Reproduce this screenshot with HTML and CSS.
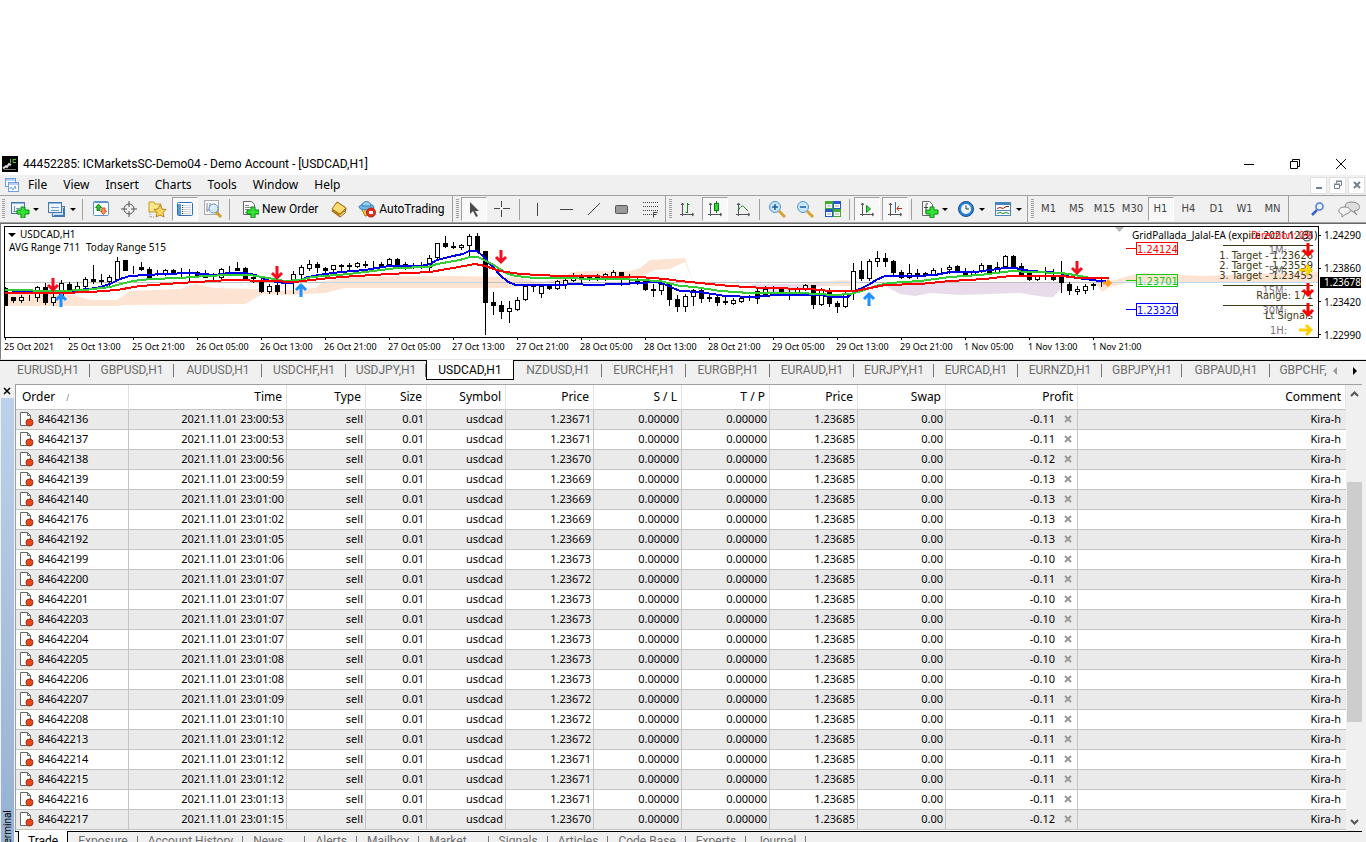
FILE: index.html
```html
<!DOCTYPE html>
<html lang="en">
<head>
    <meta charset="utf-8">
    <title>44452285: ICMarketsSC-Demo04 - Demo Account - [USDCAD,H1]</title>
    <link rel="stylesheet" href="styles.css">
</head>
<body>
    <header class="titlebar">
        <svg class="app-icon" width="16" height="16" viewBox="0 0 16 16">
            <rect width="16" height="16" fill="#000"/>
            <path d="M1 12.500 L4 10 L5 11 L7 8 L9 9" stroke="#d8d8d8" stroke-width="2" fill="none"/>
            <path d="M8.500 3v4 M14 3.500h-3v3h3" stroke="#58c322" fill="none"/>
            <path d="M2 13.500 H14" stroke="#777"/>
        </svg>
        <h1>44452285: ICMarketsSC-Demo04 - Demo Account - [USDCAD,H1]</h1>
        <div class="window-buttons">
            <button aria-label="Minimize"><svg width="12" height="12"><path d="M1 6.500H11" stroke="#000"/></svg></button>
            <button aria-label="Restore"><svg width="12" height="12" fill="none" stroke="#000"><path d="M1.500 3.500h7v7h-7z M3.500 3.500v-2h7v7h-2"/></svg></button>
            <button aria-label="Close"><svg width="12" height="12"><path d="M1 1L11 11M11 1L1 11" stroke="#000"/></svg></button>
        </div>
    </header>

    <nav class="menubar">
        <svg class="doc-icon" width="16" height="16" fill="none" stroke="#6d9fe0">
            <rect x="1.500" y="1.500" width="10" height="8" fill="#fff"/><path d="M1 3H12"/>
            <rect x="4.500" y="5.500" width="10" height="9" fill="#fff"/><path d="M4 7H15"/>
            <path d="M6 12l1-2 2 3 2-4 1 3"/>
        </svg>
        <button>File</button>
        <button>View</button>
        <button>Insert</button>
        <button>Charts</button>
        <button>Tools</button>
        <button>Window</button>
        <button>Help</button>
        <div class="mdi-buttons">
            <button aria-label="Minimize chart"><svg width="10" height="10"><path d="M2 8H8" stroke="#71808f" stroke-width="2"/></svg></button>
            <button aria-label="Restore chart"><svg width="10" height="10" fill="none" stroke="#71808f"><path d="M1.500 4.500h5v4h-5z M1 4h6 M3.500 3.500v-2h5v4h-2 M3 1h6"/></svg></button>
            <button aria-label="Close chart"><svg width="10" height="10"><path d="M2 2L8 8M8 2L2 8" stroke="#71808f" stroke-width="2"/></svg></button>
        </div>
    </nav>

    <div class="toolbars">
        <div class="toolbar">
            <span class="grip"></span>
            <button class="tool split" aria-label="New chart">
                <svg width="20" height="18"><rect x="1.500" y="2.500" width="13" height="11" fill="#eef5fc" stroke="#3f78b5"/><path d="M1 3H15" stroke="#3f78b5"/><path d="M4.500 6v6M6 8.500h4M3 11.500h6" stroke="#7a92ab"/><path d="M11 7h4v3h4v4h-4v4h-4v-4H7v-4h4z" fill="#2fe52f" stroke="#11831b"/></svg>
                <i class="caret"></i>
            </button>
            <button class="tool split" aria-label="Profiles">
                <svg width="20" height="18"><rect x="5.500" y="6.500" width="12" height="10" fill="#c9def2" stroke="#3f78b5"/><path d="M7 15.500H17M16.500 8v8" stroke="#3f78b5"/><rect x="1.500" y="2.500" width="13" height="10" fill="#eef5fc" stroke="#3f78b5"/><path d="M1 3H15" stroke="#3f78b5"/><path d="M4 7.500h8M4 10.500h8" stroke="#6b9acb"/></svg>
                <i class="caret"></i>
            </button>
            <span class="sep"></span>
            <button class="tool" aria-label="Market Watch">
                <svg width="18" height="18"><rect x="1.500" y="1.500" width="15" height="14" rx="1" fill="#fff" stroke="#5b93cf"/><path d="M2 2.500H16" stroke="#5b93cf"/><path d="M6.500 4l3 3.500H8v3H5v-3H3.500z" fill="#35c035" stroke="#16851c"/><path d="M11.500 14.500l-3-3.500H10V8h3v3h1.500z" fill="#ffa06c" stroke="#d2460c"/></svg>
            </button>
            <button class="tool" aria-label="Data Window">
                <svg width="18" height="18" fill="none" stroke="#555"><circle cx="9" cy="9" r="5"/><path d="M9 1v6M9 11v6M1 9h6M11 9h6"/></svg>
            </button>
            <button class="tool" aria-label="Navigator">
                <svg width="20" height="20"><path d="M2 3h5l1 2h6v8H2z" fill="#fbe58d" stroke="#c79a2a"/><path d="M3 13v5h5" stroke="#888" stroke-dasharray="1 1" fill="none"/><path d="M13 6l2 4 4 .5-3 3 1 4.500-4-2-4 2 1-4.500-3-3 4-.5z" fill="#ffd75e" stroke="#b9801a"/></svg>
            </button>
            <button class="tool pressed" aria-label="Terminal">
                <svg width="18" height="16"><rect x="1.500" y="1.500" width="15" height="13" rx="1" fill="#f8fbff" stroke="#2f6fb7"/><path d="M2 3h3v11H2z" fill="#5d97d6"/><path d="M7 4.500h8M7 6.500h8M7 8.500h8M7 10.500h8M7 12.500h8" stroke="#d2d6dc"/><path d="M6 4.500h1M6 6.500h1M6 8.500h1M6 10.500h1M6 12.500h1" stroke="#444"/></svg>
            </button>
            <button class="tool" aria-label="Strategy Tester">
                <svg width="20" height="20"><rect x="1.500" y="1.500" width="14" height="14" fill="#f8f8f8" stroke="#aaa"/><path d="M4 4v9M4 11h9M7 4v4" stroke="#888"/><path d="M13 13l5 5" stroke="#d49d2d" stroke-width="3"/><circle cx="10.500" cy="9.500" r="4.500" fill="#d6eafa" fill-opacity=".8" stroke="#5a8fc4"/></svg>
            </button>
            <span class="sep"></span>
            <button class="tool wide">
                <svg width="18" height="18"><path d="M2.500 1.500h8l3 3v10h-11z" fill="#fff" stroke="#666"/><path d="M4 5.500h4M4 7.500h6M4 9.500h4M4 12.500h4" stroke="#888"/><path d="M10 7h4v3h4v4h-4v4h-4v-4H6v-4h4z" fill="#2fe52f" stroke="#11831b"/></svg>
                New Order
            </button>
            <button class="tool" aria-label="MetaEditor">
                <svg width="18" height="18"><path d="M7 2l9 6-1 5-5 4-8-6z" fill="#c58a1c" stroke="#8e5d0e"/><path d="M7 2l9 6-6 6-8-5z" fill="#ffdc73" stroke="#a87516"/><path d="M10 16l5-4" stroke="#fff3c8"/></svg>
            </button>
            <button class="tool wide auto">
                <svg width="18" height="18"><path d="M3 8l4 8 6-1 3-7z" fill="#f2c04b" stroke="#b57f17"/><ellipse cx="8.500" cy="7" rx="7.500" ry="3" fill="#6fb4e0" stroke="#3c85b6"/><path d="M4 6c0-6 9-6 9 0z" fill="#93d0f0" stroke="#3c85b6"/><circle cx="13" cy="12.500" r="4.500" fill="#e33119" stroke="#ac1b0a"/><rect x="11" y="11" width="4" height="3" fill="#fff"/></svg>
                AutoTrading
            </button>
        </div>

        <div class="toolbar lines">
            <span class="grip"></span>
            <button class="tool pressed" aria-label="Cursor">
                <svg width="16" height="18"><path d="M4 2v12l3-3 3 6 2-1-3-5h4z" fill="#4a4a4a"/></svg>
            </button>
            <button class="tool" aria-label="Crosshair">
                <svg width="18" height="18" stroke="#444"><path d="M8.500 1v6M8.500 10v7M1 8.500h6M10 8.500h7"/></svg>
            </button>
            <span class="sep"></span>
            <button class="tool" aria-label="Vertical line"><svg width="16" height="16"><path d="M7.500 2v13" stroke="#444"/></svg></button>
            <button class="tool" aria-label="Horizontal line"><svg width="16" height="16"><path d="M2 8.500h13" stroke="#444"/></svg></button>
            <button class="tool" aria-label="Trendline"><svg width="16" height="16"><path d="M2 14L14 2" stroke="#444"/></svg></button>
            <button class="tool" aria-label="Rectangle"><svg width="16" height="16"><rect x="1.500" y="4.500" width="12" height="8" rx="1" fill="#999" stroke="#555"/></svg></button>
            <button class="tool" aria-label="Fibonacci retracement"><svg width="18" height="20"><path d="M2 3.500h15M2 7.500h15M2 11.500h15M2 15.500h9" stroke="#444" stroke-dasharray="1 1"/><path d="M12.500 18.500v-5h4M12.500 15.500h3" stroke="#444" fill="none"/></svg></button>
        </div>

        <div class="toolbar charts">
            <span class="grip"></span>
            <button class="tool" aria-label="Bar chart"><svg width="18" height="18"><path d="M4.500 3v13M2 14.500h13M3 5l1.500-2 1.500 2M14 13l2 1.500-2 1.500" stroke="#555" fill="none"/><path d="M9.500 12.500h-2M9.500 3v10M9.500 4.500h2" stroke="#10891a"/></svg></button>
            <button class="tool pressed" aria-label="Candlesticks"><svg width="18" height="18"><path d="M4.500 3v13M2 14.500h13M3 5l1.500-2 1.500 2M14 13l2 1.500-2 1.500" stroke="#555" fill="none"/><path d="M10.500 1v12" stroke="#0a7a14"/><rect x="8.500" y="3.500" width="4" height="7" fill="#33d540" stroke="#0a7a14"/></svg></button>
            <button class="tool" aria-label="Line chart"><svg width="18" height="18"><path d="M4.500 3v13M2 14.500h13M3 5l1.500-2 1.500 2M14 13l2 1.500-2 1.500" stroke="#555" fill="none"/><path d="M4 11c3-6 5-6 7-3l3 3" stroke="#10891a" fill="none"/></svg></button>
            <span class="sep"></span>
            <button class="tool" aria-label="Zoom in"><svg width="18" height="18"><path d="M11 11l6 6" stroke="#d8a22c" stroke-width="3"/><circle cx="7" cy="7" r="5.500" fill="#c9e6fa" stroke="#4f93cc"/><path d="M4 7h6M7 4v6" stroke="#1c5d9c" stroke-width="1.500"/></svg></button>
            <button class="tool" aria-label="Zoom out"><svg width="18" height="18"><path d="M11 11l6 6" stroke="#d8a22c" stroke-width="3"/><circle cx="7" cy="7" r="5.500" fill="#c9e6fa" stroke="#4f93cc"/><path d="M4 7h6" stroke="#1c5d9c" stroke-width="1.500"/></svg></button>
            <button class="tool" aria-label="Tile windows"><svg width="18" height="18"><path d="M1 1h8v8H1z" fill="#3fae2e"/><path d="M9 9h8v8H9z" fill="#3fae2e"/><path d="M9 1h8v8H9z M1 9h8v8H1z" fill="#2554d0"/><path d="M2 4h6v4H2z M10 4h6v4h-6z M2 12h6v4H2z M10 12h6v4h-6z" fill="#fff"/><path d="M3 6h4M11 6h4M3 14h4M11 14h4" stroke="#9ab"/></svg></button>
            <span class="sep"></span>
            <button class="tool pressed" aria-label="Auto scroll"><svg width="18" height="18"><path d="M4.500 3v13M2 14.500h13M3 5l1.500-2 1.500 2M14 13l2 1.500-2 1.500" stroke="#555" fill="none"/><path d="M8.500 5.500v7l4-3.500z" fill="#4ad64a" stroke="#10891a"/></svg></button>
            <button class="tool pressed" aria-label="Chart shift"><svg width="18" height="18"><path d="M4.500 3v13M2 14.500h13M3 5l1.500-2 1.500 2M14 13l2 1.500-2 1.500" stroke="#555" fill="none"/><path d="M9.500 2v11" stroke="#2a72b5"/><path d="M11 8.500h5M13 6l-2 2.500 2 2.500" stroke="#c03010" fill="none"/></svg></button>
            <span class="sep"></span>
            <button class="tool split" aria-label="Indicators">
                <svg width="20" height="18"><path d="M3.500 1.500h7l3 3v11h-10z" fill="#fff" stroke="#666"/><path d="M9 4c-2-1-2 0-2 2v7M5 7.500h4" stroke="#444" fill="none"/><path d="M11 7h4v3h4v4h-4v4h-4v-4H7v-4h4z" fill="#2fe52f" stroke="#11831b"/></svg>
                <i class="caret"></i>
            </button>
            <button class="tool split" aria-label="Periods">
                <svg width="20" height="18"><circle cx="10" cy="9" r="7.500" fill="#2c7fd0" stroke="#164f93"/><circle cx="10" cy="9" r="5" fill="#eef6fd"/><path d="M10 5.500V9h3" stroke="#333" fill="none"/></svg>
                <i class="caret"></i>
            </button>
            <button class="tool split" aria-label="Templates">
                <svg width="20" height="18"><rect x="2.500" y="2.500" width="15" height="13" fill="#fff" stroke="#4a84bf"/><path d="M2 3.500h16" stroke="#4a84bf" stroke-width="3"/><path d="M2 10.500h16" stroke="#4a84bf"/><path d="M4 8.500l3-1 3 1 3-2 3 0" stroke="#a02010" fill="none"/><path d="M4 13.500l3-1 3 1 3-1 3 1" stroke="#20802a" fill="none"/></svg>
                <i class="caret"></i>
            </button>
        </div>

        <div class="toolbar periods">
            <span class="grip"></span>
            <button class="tool">M1</button>
            <button class="tool">M5</button>
            <button class="tool">M15</button>
            <button class="tool">M30</button>
            <button class="tool pressed">H1</button>
            <button class="tool">H4</button>
            <button class="tool">D1</button>
            <button class="tool">W1</button>
            <button class="tool">MN</button>
        </div>

        <div class="toolbar-right">
            <button class="tool" aria-label="Search"><svg width="16" height="16"><path d="M7 9l-5 5" stroke="#3a62c8" stroke-width="2.500"/><circle cx="9.500" cy="5.500" r="3.500" fill="#eef4ff" stroke="#4a78e0" stroke-width="1.500"/></svg></button>
            <button class="tool" aria-label="Chat"><svg width="22" height="18"><path d="M13 2c11 0 11 9 3 9l3 4-5-4c-9 0-9-9-1-9z" fill="#ddd" stroke="#888"/><path d="M6 7c8 0 8 6 2 7l-4 3 0-3c-5-1-4-7 2-7z" fill="#f4f4f4" stroke="#888"/></svg></button>
        </div>
    </div>

    <main class="chart">
        <div class="chart-body">
            <svg class="plot" id="plot">
                <!-- everything below is drawn in window coordinates -->
                <g transform="translate(-5,-227)">
                    <g id="clouds"></g>
                    <path d="M5 282.500H1318" stroke="#c0c0c0"/>
                    <path d="M325 282.500H485 M820 282.500H860 M1110 282.500H1318" stroke="#b9dcf4"/>
                    <g id="candles"></g>
                    <g id="averages"></g>
                    <g id="signals"></g>

                    <path d="M8 233h8l-4 4z" fill="#000"/>
                    <text class="label" x="20" y="238">USDCAD,H1</text>
                    <text class="label" x="9" y="251">AVG Range 711</text>
                    <text class="label" x="86" y="251">Today Range 515</text>

                    <path d="M1115 227h9l-4.500 5z" fill="#b8b8b8"/>
                    <text class="label" x="1132" y="239">GridPallada_Jalal-EA (expire 2021.12.31)</text>
                    <text class="label red" x="1251" y="239">Direction: 0%</text>
                    <circle cx="1307" cy="236" r="5" fill="none" stroke="#333"/>
                    <path d="M1304 235h1M1309 235h1M1304 239q3-3 6 0" stroke="#333" fill="none"/>

                    <g class="level red"><path d="M1126 248.500h10"/><rect x="1136.500" y="242.500" width="41" height="12"/><text x="1137" y="253">1.24124</text></g>
                    <g class="level green"><path d="M1126 280.500h10"/><rect x="1136.500" y="274.500" width="41" height="12"/><text x="1137" y="285">1.23701</text></g>
                    <g class="level blue"><path d="M1126 309.500h10"/><rect x="1136.500" y="303.500" width="41" height="12"/><text x="1137" y="314">1.23320</text></g>

                    <path d="M1223 245.500h90M1223 285.500h90M1223 305.500h90" stroke="#3f3a14"/>
                    <g class="frames">
                        <text x="1287" y="254">1M:</text>
                        <text x="1287" y="274">5M:</text>
                        <text x="1287" y="294">15M:</text>
                        <text x="1287" y="314">30M:</text>
                        <text x="1287" y="334">1H:</text>
                    </g>
                    <g class="targets">
                        <text x="1313" y="259">1. Target - 1.23626</text>
                        <text x="1313" y="269">2. Target - 1.23559</text>
                        <text x="1313" y="279">3. Target - 1.23455</text>
                        <text x="1313" y="299">Range: 171</text>
                        <text x="1313" y="319">Lt Signals</text>
                    </g>
                    <g id="panel-arrows"></g>
                </g>
            </svg>
            <div class="price-scale">
                <span>1.24290</span>
                <span>1.23860</span>
                <span>1.23420</span>
                <span>1.22990</span>
                <b>1.23678</b>
            </div>
        </div>
        <div class="time-scale" id="time-scale"></div>
    </main>

    <nav class="chart-tabs">
        <a href="#">EURUSD,H1</a>
        <a href="#">GBPUSD,H1</a>
        <a href="#" class="long">AUDUSD,H1</a>
        <a href="#">USDCHF,H1</a>
        <a href="#" class="short">USDJPY,H1</a>
        <a href="#" class="long active">USDCAD,H1</a>
        <a href="#" class="long">NZDUSD,H1</a>
        <a href="#">EURCHF,H1</a>
        <a href="#">EURGBP,H1</a>
        <a href="#">EURAUD,H1</a>
        <a href="#" class="short">EURJPY,H1</a>
        <a href="#">EURCAD,H1</a>
        <a href="#">EURNZD,H1</a>
        <a href="#" class="short">GBPJPY,H1</a>
        <a href="#" class="long">GBPAUD,H1</a>
        <a href="#" class="last">GBPCHF,</a>
        <div class="tab-scroll">
            <button aria-label="Scroll left"><svg width="6" height="8"><path d="M5 0v8L1 4z" fill="#999"/></svg></button>
            <button aria-label="Scroll right"><svg width="6" height="8"><path d="M1 0v8l4-4z" fill="#000"/></svg></button>
        </div>
    </nav>

    <section class="terminal">
        <aside class="terminal-side">
            <button aria-label="Close terminal"><svg width="8" height="8"><path d="M1 1L7 7M7 1L1 7" stroke="#000" stroke-width="1.500"/></svg></button>
            <div class="terminal-name">Terminal</div>
        </aside>
        <div class="terminal-main">
            <div class="orders">
                <table>
                    <colgroup>
                        <col class="c-order"><col class="c-time"><col class="c-type"><col class="c-size"><col class="c-type">
                        <col class="c-num"><col class="c-num"><col class="c-num"><col class="c-num"><col class="c-num">
                        <col class="c-profit"><col>
                    </colgroup>
                    <thead>
                        <tr>
                            <th>Order <small>/</small></th><th>Time</th><th>Type</th><th>Size</th><th>Symbol</th><th>Price</th>
                            <th>S / L</th><th>T / P</th><th>Price</th><th>Swap</th><th>Profit</th><th>Comment</th>
                        </tr>
                    </thead>
                    <tbody id="orders"></tbody>
                </table>
                <div class="scrollbar">
                    <button aria-label="Scroll up"><svg width="9" height="6"><path d="M1 5l3.500-3.500L8 5" stroke="#555" stroke-width="2" fill="none"/></svg></button>
                    <div class="thumb"></div>
                    <button aria-label="Scroll down"><svg width="9" height="6"><path d="M1 1l3.500 3.500L8 1" stroke="#555" stroke-width="2" fill="none"/></svg></button>
                </div>
            </div>
            <nav class="terminal-tabs">
                <a href="#" class="active">Trade</a>
                <a href="#">Exposure</a>
                <a href="#">Account History</a>
                <a href="#" class="counted">News</a>
                <a href="#">Alerts</a>
                <a href="#">Mailbox</a>
                <a href="#" class="counted">Market</a>
                <a href="#">Signals</a>
                <a href="#">Articles</a>
                <a href="#">Code Base</a>
                <a href="#">Experts</a>
                <a href="#">Journal</a>
            </nav>
        </div>
    </section>

    <script src="script.js"></script>
</body>
</html>
```
FILE: styles.css
```css
* {
    box-sizing: border-box;
}
body {
    margin: 0;
    padding-top: 152px;
    height: 100vh;
    overflow: hidden;
    background: #fff;
    color: #000;
    font: 12px/16px Roboto, "Noto Sans", sans-serif;
}
button {
    padding: 0;
    border: 0;
    background: none;
    color: inherit;
    font: inherit;
}
a {
    color: inherit;
    text-decoration: none;
}
svg {
    display: block;
    flex: none;
}

/* title and menu */
.titlebar {
    display: flex;
    align-items: center;
    height: 23px;
    padding-left: 2px;
}
.titlebar h1 {
    flex: 1;
    margin: 0 0 0 5px;
    font-size: 12px;
    font-weight: normal;
}
.window-buttons {
    display: flex;
    padding-right: 2px;
}
.window-buttons button {
    display: grid;
    place-items: center;
    width: 46px;
    height: 20px;
}
.menubar {
    display: flex;
    align-items: center;
    height: 20px;
    padding-left: 4px;
    background: #f0f0f0;
    font-family: "Noto Sans", "Open Sans", sans-serif;
}
.menubar > button {
    padding: 0 8px;
}
.mdi-buttons {
    display: flex;
    gap: 2px;
    margin-left: auto;
    padding-right: 1px;
}
.mdi-buttons button {
    display: grid;
    place-items: center;
    width: 17px;
    height: 17px;
    background: #fff;
    border: 1px solid #e0e0e0;
}

/* toolbars */
.toolbars {
    display: flex;
    height: 28px;
    border-top: 1px solid #a0a0a0;
    border-bottom: 1px solid #a0a0a0;
    background: #f0f0f0;
}
.toolbar {
    display: flex;
    align-items: center;
    border-right: 1px solid #a0a0a0;
    margin-right: 1px;
    padding-right: 1px;
}
.grip {
    width: 3px;
    height: 20px;
    margin: 0 1px 0 2px;
    background: repeating-linear-gradient(#a0a0a0 0 1px, #f0f0f0 1px 2px);
}
.tool {
    display: flex;
    align-items: center;
    justify-content: center;
    width: 26px;
    height: 24px;
    margin: 0 1px;
    border: 1px solid transparent;
    white-space: nowrap;
}
.tool.pressed {
    border-color: #a0a0a0 #fff #fff #a0a0a0;
    background: #f8f8f8;
}
.tool.split {
    width: 35px;
    gap: 3px;
}
.tool.wide {
    width: auto;
    padding: 0 5px;
    gap: 3px;
}
.tool.auto {
    padding: 0 4px 0 3px;
}
.caret {
    border: 3px solid transparent;
    border-top-color: #000;
    border-bottom: 0;
}
.sep {
    width: 1px;
    height: 21px;
    margin: 0 4px 0 2px;
    background: #a0a0a0;
}
.lines .sep {
    margin: 0 4px 0 3px;
}
.charts .sep {
    margin: 0 3px 0 2px;
}
.periods .tool {
    color: #444;
    font: 10px/14px "DejaVu Sans", sans-serif;
}
.toolbar-right {
    display: flex;
    align-items: center;
    gap: 3px;
    margin-left: auto;
    padding-right: 3px;
}

/* chart window */
.chart {
    height: 137px;
    padding: 2px 0 0 3px;
    border-left: 1px solid #808080;
    border-top: 1px solid #696969;
    border-bottom: 1px solid #e3e3e3;
}
.chart-body {
    display: flex;
    height: 112px;
}
.plot {
    flex: 1;
    min-width: 0;
    height: 112px;
    border: 1px solid #000;
}
.plot text {
    font: 11px "DejaVu Sans Condensed", sans-serif;
}
.plot .label {
    font: 10px "Noto Sans", sans-serif;
}
.plot .red text, .plot .label.red { fill: #f00; }
.plot .green text { fill: #1c1; }
.plot .blue text { fill: #00f; }
.level path, .level rect { fill: none; stroke: #f00; }
.level.green path, .level.green rect { stroke: #1c1; }
.level.blue path, .level.blue rect { stroke: #00f; }
.frames text { fill: #7c7480; text-anchor: end; }
.targets text { fill: #3f3a14; text-anchor: end; }
#averages { shape-rendering: crispEdges; }
.price-scale {
    position: relative;
    display: flex;
    flex-direction: column;
    justify-content: space-between;
    width: 47px;
    height: 116px;
    padding-top: 2px;
    font: 10px/14px "Noto Sans", sans-serif;
}
.price-scale span {
    display: flex;
    align-items: center;
    gap: 3px;
}
.price-scale span::before {
    content: "";
    width: 2px;
    height: 1px;
    background: #000;
}
.price-scale b {
    position: absolute;
    top: 51px;
    left: 1px;
    width: 41px;
    height: 11px;
    padding-left: 4px;
    background: #000;
    color: #fff;
    font-weight: normal;
    line-height: 11px;
}
.time-scale {
    display: flex;
    font: 9px/14px "Noto Sans", sans-serif;
    white-space: nowrap;
}
.time-scale span {
    flex: 0 0 64px;
}
.time-scale span::before {
    content: "";
    display: block;
    width: 1px;
    height: 2px;
    margin-left: 1px;
    background: #000;
}

/* chart tabs */
.chart-tabs {
    display: flex;
    height: 20px;
    padding-left: 6px;
    border-top: 1px solid #000;
    background: #f0f0f0;
    color: #6d6d6d;
}
.chart-tabs a {
    display: flex;
    align-items: center;
    justify-content: center;
    flex: 0 0 84px;
    height: 17px;
    background: linear-gradient(#777, #777) right 3px / 1px 13px no-repeat;
}
.chart-tabs a.long {
    flex-basis: 88px;
}
.chart-tabs a.short {
    flex-basis: 80px;
}
.chart-tabs a.active {
    margin-top: -1px;
    height: 20px;
    border: 1px solid #000;
    border-top: 0;
    background: #fff;
    color: #000;
}
.chart-tabs a.last {
    flex: 0 0 60px;
    padding-left: 6px;
    background: none;
}
.tab-scroll {
    display: flex;
    align-items: center;
    gap: 14px;
    margin-left: auto;
    padding-right: 8px;
}

/* terminal */
.terminal {
    display: flex;
    padding-top: 4px;
    background: #f0f0f0;
}
.terminal-side {
    display: flex;
    flex-direction: column;
    width: 15px;
}
.terminal-side button {
    display: grid;
    place-items: center;
    width: 13px;
    height: 14px;
}
.terminal-name {
    flex: 1;
    width: 13px;
    margin-left: 1px;
    padding-top: 9px;
    background: linear-gradient(#95b0d0, #bcd2ea);
    font-size: 10px;
    line-height: 13px;
    writing-mode: vertical-rl;
    transform: rotate(180deg);
}
.terminal-main {
    flex: 1;
    min-width: 0;
    padding-right: 4px;
}
.orders {
    display: flex;
    height: 447px;
    overflow: hidden;
    border-top: 1px solid #a0a0a0;
    border-left: 1px solid #a0a0a0;
    background: #fff;
}
table {
    flex: 1;
    align-self: flex-start;
    table-layout: fixed;
    width: 0;
    border-collapse: separate;
    border-spacing: 0;
    font: 11px/16px "Noto Sans", "Open Sans", sans-serif;
}
.c-order { width: 113px; }
.c-time { width: 158px; }
.c-type { width: 79px; }
.c-size { width: 61px; }
.c-num { width: 88px; }
.c-profit { width: 132px; }
th, td {
    height: 20px;
    padding: 0 2px 2px 0;
    border-right: 1px solid #c4c4c4;
    border-bottom: 1px solid #c4c4c4;
    text-align: right;
    white-space: nowrap;
}
th {
    height: 25px;
    padding: 0 4px 0 0;
    border-right-color: #e2e2e2;
    font-size: 12px;
    font-weight: normal;
}
th:first-child {
    padding-left: 6px;
    text-align: left;
}
th small {
    margin-left: 8px;
    color: #777;
    font-size: 8px;
}
td:last-child {
    padding-right: 5px;
    border-right: 0;
}
tbody tr:nth-child(odd) {
    background: #eaeaea;
}
.ticket {
    display: flex;
    align-items: center;
    gap: 4px;
    padding-left: 3px;
}
.profit {
    display: flex;
    align-items: center;
    justify-content: flex-end;
    gap: 9px;
    padding-right: 3px;
}
.scrollbar {
    display: flex;
    flex-direction: column;
    width: 16px;
    background: #f0f0f0;
}
.scrollbar button {
    display: grid;
    place-items: center;
    height: 18px;
}
.thumb {
    height: 240px;
    margin: 79px 0 auto 1px;
    background: #cdcdcd;
}
.terminal-tabs {
    display: flex;
    height: 27px;
    padding-left: 3px;
    border-top: 1px solid #000;
    color: #6d6d6d;
}
.terminal-tabs a {
    height: 18px;
    padding: 1px 10px 0;
    background: linear-gradient(#777, #777) right 4px / 1px 13px no-repeat;
}
.terminal-tabs a.counted {
    padding-right: 22px;
}
.terminal-tabs a.active {
    margin-top: -1px;
    height: 22px;
    padding: 2px 9px 0;
    border: 1px solid #000;
    border-top: 0;
    background: #fff;
    color: #000;
}
```
FILE: script.js
```js
// one candle every 8px: [high, body top, body bottom, low, filled]
const candles = [
    [287,288,305,305,1], [297,297,300,302,1], [295,297,300,302,0], [295,298,298,300,1], [286,287,297,301,0],
    [283,287,302,304,1], [294,297,302,305,0], [280,283,297,298,0], [282,284,290,291,1], [282,286,291,292,0],
    [277,279,286,287,0], [265,279,281,283,1], [274,280,281,284,1], [275,277,281,285,0], [257,261,279,280,0],
    [260,260,270,270,1], [266,269,269,273,1], [262,267,269,270,1], [267,269,278,278,1], [270,272,272,275,1],
    [269,270,273,275,0], [269,270,273,274,1], [268,272,272,278,1], [269,272,272,282,1], [271,272,275,277,1],
    [270,274,277,277,1], [273,277,277,279,1], [268,269,277,279,0], [266,270,270,273,1], [262,268,270,270,1],
    [267,268,278,279,1], [275,277,278,282,1], [276,281,291,292,1], [284,286,291,293,0], [281,285,291,294,1],
    [283,287,287,293,1], [271,274,282,293,0], [265,267,274,277,0], [260,264,268,270,0], [262,264,267,272,1],
    [267,268,270,273,1], [265,265,269,271,0], [264,265,266,270,1], [263,265,266,270,1], [262,263,266,267,0],
    [261,264,265,267,1], [261,264,264,267,1], [262,264,266,267,1], [258,259,264,265,0], [258,259,264,265,1],
    [262,264,266,269,1], [263,264,264,268,1], [262,266,266,268,1], [255,258,267,270,0], [243,243,257,258,0],
    [236,243,246,247,1], [242,246,247,248,1], [244,245,247,249,0], [234,236,245,257,0], [233,236,251,252,1],
    [251,251,302,334,1], [292,302,305,314,1], [301,305,311,318,1], [301,308,311,322,0], [297,300,309,310,0],
    [284,286,299,300,0], [284,285,286,291,1], [285,286,293,297,0], [285,286,288,289,1], [280,281,288,289,0],
    [279,280,284,288,0], [273,276,280,281,0], [274,276,279,282,1], [276,277,279,280,1], [274,275,279,280,1],
    [273,274,279,280,0], [270,272,277,278,0], [272,272,278,285,1], [274,278,278,284,1], [278,279,283,284,1],
    [279,280,289,290,1], [284,289,290,296,1], [283,284,290,294,0], [282,283,299,305,1], [295,299,306,311,1],
    [294,296,306,311,0], [289,290,296,305,0], [289,290,298,302,1], [293,297,298,301,1], [296,297,302,305,1],
    [295,301,302,304,1], [298,300,303,304,0], [297,298,301,302,0], [295,298,298,300,1], [289,291,298,303,1],
    [286,289,294,295,0], [286,290,290,293,1], [287,288,292,294,1], [289,292,292,299,1], [287,288,293,294,0],
    [284,285,289,290,0], [285,285,304,308,1], [288,289,304,305,0], [288,290,303,306,1], [301,303,306,312,1],
    [292,293,306,307,0], [263,271,290,299,0], [261,270,278,280,1], [259,261,278,280,0], [251,258,261,266,0],
    [253,258,261,266,1], [260,261,272,275,1], [270,272,277,278,1], [264,273,277,278,0], [269,273,276,278,1],
    [272,273,275,276,1], [268,270,274,275,0], [268,270,270,273,1], [265,267,269,273,0], [265,266,272,272,1],
    [268,271,275,276,1], [270,271,274,275,0], [263,265,271,272,0], [265,265,272,273,1], [262,267,272,273,0],
    [255,256,266,267,0], [255,256,267,268,1], [263,266,274,275,1], [270,271,279,280,1], [275,276,279,280,0],
    [267,277,277,279,1], [269,275,279,280,1], [261,275,282,292,1], [282,284,290,294,1], [286,289,291,294,0],
    [284,286,290,293,0], [283,284,285,289,1], [278,283,283,286,1]
];

const averages = [
    ['#0000e6', '5,290 20,291 70,291 97,288 110,284 120,279 130,276 146,275 165,274 190,273 215,275 228,273 245,273 256,275 262,278 270,281 285,283 293,283 300,280 308,277 325,274 341,272 365,270 389,266 421,266 430,264 437,260 453,256 463,254 469,251 477,251 484,257 492,266 500,275 508,282 516,285 560,285 575,284 590,285 620,284 640,283 656,282 664,284 680,291 700,292 725,296 755,297 775,295 820,295 835,297 848,297 855,291 862,288 870,284 876,280 885,276 915,276 935,275 950,272 975,272 990,270 1005,268 1015,268 1030,271 1061,273 1070,277 1085,279 1100,281 1106,281'],
    ['#32cd32', '5,290 60,291 85,290 110,287 117,285 133,281 150,279 180,278 205,276 230,275 250,275 262,277 285,281 300,280 312,277 349,274 365,272 397,268 428,267 437,264 460,260 470,257 478,257 492,264 508,274 516,276 535,278 620,279 660,281 680,286 695,287 720,291 750,293 800,293 835,295 850,294 862,291 875,286 890,283 920,281 950,277 980,275 1012,271 1030,272 1061,273 1075,275 1090,278 1109,278'],
    ['#ff0000', '5,293 60,293 90,292 117,290 140,286 180,283 230,280 270,281 295,282 320,279 341,277 389,274 430,272 453,268 475,264 485,266 500,271 520,274 560,276 640,277 665,279 680,281 710,284 730,286 765,288 810,289 830,291 855,291 870,288 885,285 920,284 950,281 985,279 1010,276 1061,276 1080,278 1109,278']
];

const clouds = [
    ['#fce3d2', '5,293 70,294 90,300 117,300 130,291 180,289 195,284 215,288 258,289 262,292 290,290 315,288 325,281 349,277 455,276 515,277 540,282 560,279 572,272 590,271 630,271 640,268 650,260 685,258 693,282 685,262 670,269 655,270 640,277 560,282 530,285 510,288 345,288 325,293 290,295 262,294 245,304 125,305 117,306 5,306'],
    ['#fce3d2', '790,286 815,282 845,280 860,282 850,286'],
    ['#e8dcea', '750,284 765,293 790,292 830,284'],
    ['#e8dcea', '880,283 900,294 915,296 930,293 960,295 1020,293 1045,297 1053,297 1060,290 1064,283'],
    ['#fce3d2', '1095,283 1102,292 1110,287 1130,282 1318,282 1318,272 1200,276 1145,273 1132,275 1115,280']
];

// x, y, direction, colour
const signals = [
    [53, 285, 'down', '#f01020'], [277, 273, 'down', '#f01020'], [501, 257, 'down', '#f01020'], [1077, 268, 'down', '#f01020'],
    [61, 300, 'up', '#1e90ff'], [301, 290, 'up', '#1e90ff'], [869, 299, 'up', '#1e90ff'], [1107, 283, 'right small', '#ff9a1e']
];
const panelArrows = [
    [1308, 250, 'down', '#f00'], [1306, 270, 'right', '#ffd000'], [1308, 290, 'down', '#f00'],
    [1308, 310, 'down', '#f00'], [1306, 330, 'right', '#ffd000']
];

const times = ['25 Oct 2021', '25 Oct 13:00', '25 Oct 21:00', '26 Oct 05:00', '26 Oct 13:00', '26 Oct 21:00', '27 Oct 05:00',
    '27 Oct 13:00', '27 Oct 21:00', '28 Oct 05:00', '28 Oct 13:00', '28 Oct 21:00', '29 Oct 05:00', '29 Oct 13:00',
    '29 Oct 21:00', '1 Nov 05:00', '1 Nov 13:00', '1 Nov 21:00'];

// ticket, time, open price, profit
const orders = [
    [84642136, '23:00:53', '1.23671', '-0.11'],
    [84642137, '23:00:53', '1.23671', '-0.11'],
    [84642138, '23:00:56', '1.23670', '-0.12'],
    [84642139, '23:00:59', '1.23669', '-0.13'],
    [84642140, '23:01:00', '1.23669', '-0.13'],
    [84642176, '23:01:02', '1.23669', '-0.13'],
    [84642192, '23:01:05', '1.23669', '-0.13'],
    [84642199, '23:01:06', '1.23673', '-0.10'],
    [84642200, '23:01:07', '1.23672', '-0.11'],
    [84642201, '23:01:07', '1.23673', '-0.10'],
    [84642203, '23:01:07', '1.23673', '-0.10'],
    [84642204, '23:01:07', '1.23673', '-0.10'],
    [84642205, '23:01:08', '1.23673', '-0.10'],
    [84642206, '23:01:08', '1.23673', '-0.10'],
    [84642207, '23:01:09', '1.23672', '-0.11'],
    [84642208, '23:01:10', '1.23672', '-0.11'],
    [84642213, '23:01:12', '1.23672', '-0.11'],
    [84642214, '23:01:12', '1.23671', '-0.11'],
    [84642215, '23:01:12', '1.23671', '-0.11'],
    [84642216, '23:01:13', '1.23671', '-0.11'],
    [84642217, '23:01:15', '1.23670', '-0.12']
];

function byId(id) {
    return document.getElementById(id);
}

function candle([high, top, bottom, low, filled], i) {
    const x = 5 + i * 8;
    return `<path d="M${x + 0.5} ${high}V${low + 1}" stroke="#000"/>
        <rect x="${x - 1.5}" y="${top + 0.5}" width="4" height="${bottom - top}" fill="${filled ? '#000' : '#fff'}" stroke="#000"/>`;
}

function arrow([x, y, direction, colour]) {
    const angle = { down: 0, up: 180, right: -90, 'right small': -90 }[direction];
    const shape = direction === 'right small' ? 'M0 -4V2M-3 0L0 3L3 0' : 'M0 -7V5M-5 0L0 5L5 0';
    return `<path transform="translate(${x},${y}) rotate(${angle})" d="${shape}" stroke="${colour}" stroke-width="3" fill="none"/>`;
}

byId('clouds').innerHTML = clouds.map(([c, p]) => `<polygon points="${p}" fill="${c}"/>`).join('');
byId('candles').innerHTML = candles.map(candle).join('');
byId('averages').innerHTML = averages.map(([c, p]) => `<polyline points="${p}" fill="none" stroke="${c}" stroke-width="2"/>`).join('');
byId('signals').innerHTML = signals.map(arrow).join('');
byId('panel-arrows').innerHTML = panelArrows.map(arrow).join('');
byId('time-scale').innerHTML = times.map(t => `<span>${t}</span>`).join('');

const docIcon = `<svg width="15" height="16"><path d="M1.500 1.500h7l3 3v10h-10z" fill="#fff" stroke="#666"/>
    <path d="M8.500 1.500v3h3" fill="none" stroke="#666"/><circle cx="10.500" cy="11.500" r="3.500" fill="#e8481c" stroke="#a82a08"/></svg>`;
const closeIcon = '<svg width="8" height="8"><path d="M1 1L7 7M7 1L1 7" stroke="#999" stroke-width="2"/></svg>';

byId('orders').innerHTML = orders.map(([ticket, time, price, profit]) => `<tr>
    <td><div class="ticket">${docIcon}${ticket}</div></td>
    <td>2021.11.01 ${time}</td><td>sell</td><td>0.01</td><td>usdcad</td><td>${price}</td>
    <td>0.00000</td><td>0.00000</td><td>1.23685</td><td>0.00</td>
    <td><div class="profit">${profit}<button aria-label="Close order">${closeIcon}</button></div></td><td>Kira-h</td>
</tr>`).join('');
```
